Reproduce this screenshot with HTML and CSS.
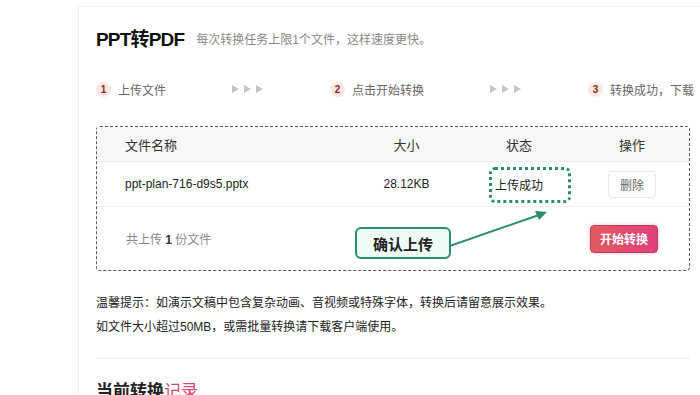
FILE: index.html
```html
<!DOCTYPE html>
<html>

<head>
    <title>PPT转PDF</title>
    <link rel="stylesheet" href="styles.css">
</head>

<body>
    <div class="card">
        <div class="headline">
            <h1 class="title">PPT转PDF</h1>
            <span class="subtitle">每次转换任务上限1个文件，这样速度更快。</span>
        </div>

        <!-- 步骤 -->
        <div class="steps">
            <div class="step"><span class="num">1</span>上传文件</div>
            <div class="arrows"><i></i><i></i><i></i></div>
            <div class="step"><span class="num">2</span>点击开始转换</div>
            <div class="arrows"><i></i><i></i><i></i></div>
            <div class="step"><span class="num">3</span>转换成功，下载</div>
        </div>

        <div class="fileBox">
            <div class="row head">
                <div class="cell name">文件名称</div>
                <div class="cell">大小</div>
                <div class="cell">状态</div>
                <div class="cell">操作</div>
            </div>
            <div class="row item">
                <div class="cell name">ppt-plan-716-d9s5.pptx</div>
                <div class="cell">28.12KB</div>
                <div class="cell">上传成功</div>
                <div class="cell"><button class="delBtn">删除</button></div>
            </div>
            <div class="foot">
                <span class="count">共上传 <b>1</b> 份文件</span>
                <button class="startBtn">开始转换</button>
            </div>

            <!-- 标注 -->
            <div class="markBox"></div>
            <svg class="markArrow" width="130" height="50" viewBox="0 0 130 50">
                <line x1="14" y1="42" x2="112" y2="8" stroke="#2b8c6e" stroke-width="2" />
                <polygon points="120,5 108,4 112,13" fill="#2b8c6e" />
            </svg>
            <div class="callout">确认上传</div>
        </div>

        <div class="tips">
            <p>温馨提示：如演示文稿中包含复杂动画、音视频或特殊字体，转换后请留意展示效果。</p>
            <p>如文件大小超过50MB，或需批量转换请下载客户端使用。</p>
        </div>

        <div class="divider"></div>

        <h2 class="record">当前转换<span>记录</span></h2>
    </div>
</body>

</html>
```

FILE: styles.css
```css
/* 页面基础 */
body {
    margin: 0;
    padding: 6px 0 0 78px;
    background: #fff;
    font-family: "Liberation Sans", "Noto Sans CJK SC", sans-serif;
    color: #222;
    overflow: hidden;
}

.card {
    border-top: 1px solid #efefef;
    border-left: 1px solid #efefef;
    padding: 0 0 40px 17px;
    width: 640px;
}

.headline {
    display: flex;
    align-items: center;
    height: 60px;
}

.title {
    margin: 0;
    font-size: 19px;
    letter-spacing: -0.8px;
    font-weight: bold;
    color: #111;
}

.subtitle {
    margin-left: 12px;
    font-size: 12px;
    color: #888;
    margin-top: 2px;
}

/* 步骤 */
.steps {
    display: flex;
    align-items: center;
    gap: 68px;
    height: 44px;
    white-space: nowrap;
}

.step {
    display: flex;
    align-items: center;
    font-size: 12px;
    color: #666;
}

.num {
    width: 15px;
    height: 15px;
    border-radius: 50%;
    background: #fbe6e2;
    color: #8a2a24;
    font-size: 10px;
    font-weight: bold;
    display: flex;
    align-items: center;
    justify-content: center;
    margin-right: 7px;
}

.arrows {
    display: flex;
    gap: 5px;
    width: 30px;
    margin-left: -2px;
}

.arrows i {
    width: 0;
    height: 0;
    border-top: 4px solid transparent;
    border-bottom: 4px solid transparent;
    border-left: 7px solid #c4c4c4;
}

/* 文件表格 */
.fileBox {
    position: relative;
    margin-top: 15px;
    width: 592px;
    border: 1px dashed #6a5252;
    border-radius: 4px;
}

.row {
    display: grid;
    grid-template-columns: 253px 113px 112px 114px;
    border-bottom: 1px solid #eee;
}

.head {
    height: 34px;
    background: #f7f7f7;
    font-size: 13px;
    color: #333;
}

.item {
    height: 44px;
    font-size: 12px;
    color: #222;
}

.cell {
    display: flex;
    align-items: center;
    justify-content: center;
}

.cell.name {
    justify-content: flex-start;
    padding-left: 28px;
}

.delBtn {
    width: 48px;
    height: 27px;
    border: 1px solid #eaeaea;
    border-radius: 4px;
    background: #fff;
    font-family: inherit;
    font-size: 12px;
    color: #666;
}

.foot {
    height: 63px;
    display: flex;
    align-items: center;
    justify-content: space-between;
    padding: 0 31px 0 29px;
}

.count {
    font-size: 12px;
    color: #888;
}

.count b {
    color: #333;
}

.startBtn {
    width: 68px;
    height: 28px;
    border: 1px solid #b9405a;
    border-radius: 4px;
    background: linear-gradient(90deg, #e35a5e, #e0407d);
    color: #fff;
    font-family: inherit;
    font-size: 12px;
    font-weight: bold;
    box-shadow: 0 0 4px rgba(224, 64, 125, 0.35);
}

/* 标注 */
.markBox {
    position: absolute;
    left: 392px;
    top: 40px;
    width: 76px;
    height: 30px;
    border: 3px dotted #2b8c6e;
    border-radius: 6px;
}

.markArrow {
    position: absolute;
    left: 330px;
    top: 80px;
}

.callout {
    position: absolute;
    left: 258px;
    top: 100px;
    width: 92px;
    height: 28px;
    border: 2px solid #2b8c6e;
    border-radius: 6px;
    background: #eefaf4;
    font-size: 15px;
    font-weight: bold;
    color: #222;
    display: flex;
    align-items: center;
    justify-content: center;
}

/* 提示 */
.tips {
    margin-top: 20px;
    font-size: 12px;
    line-height: 24px;
    color: #222;
}

.tips p {
    margin: 0;
}

.divider {
    margin-top: 18px;
    width: 594px;
    height: 2px;
    background: #f4f4f4;
}

.record {
    margin: 18px 0 0;
    font-size: 17px;
    font-weight: bold;
    color: #222;
}

.record span {
    color: #d2467a;
    font-weight: normal;
}
```
